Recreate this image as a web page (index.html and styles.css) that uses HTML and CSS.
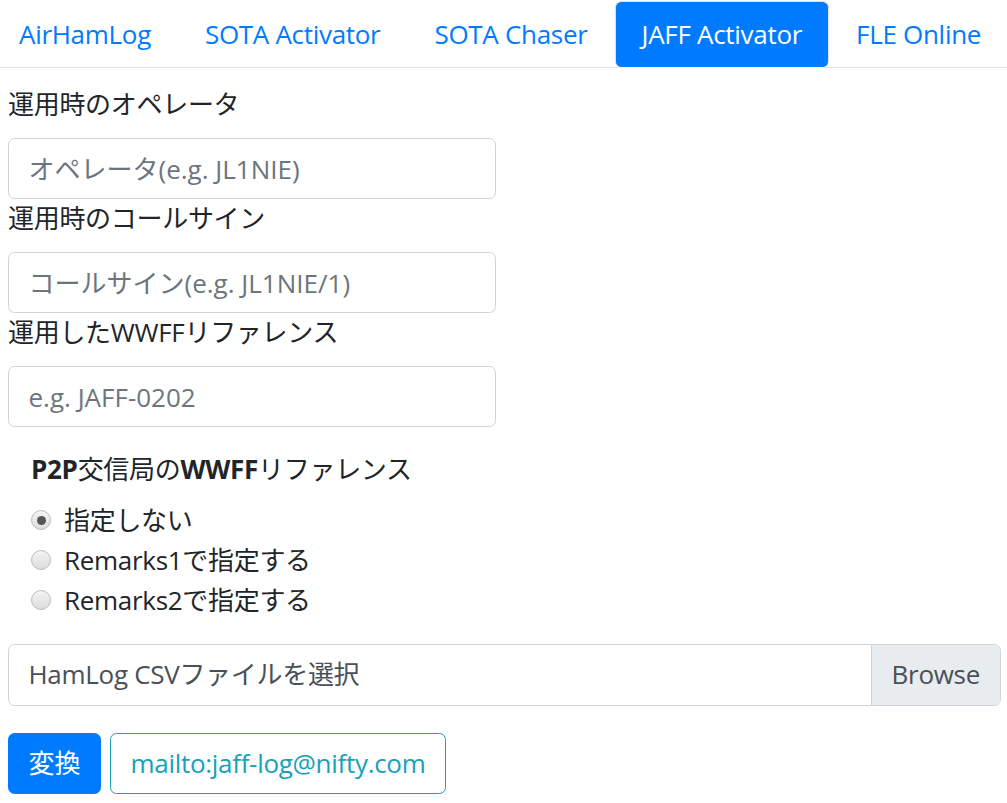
FILE: index.html
```html
<!DOCTYPE html>
<html lang="ja">

<head>
    <meta charset="UTF-8">
    <meta name="viewport" content="width=device-width, initial-scale=1.0">
    <title>JAFF Activator</title>
    <link rel="stylesheet" href="styles.css">
</head>

<body>
    <ul class="nav-tabs">
        <li><a href="#" class="nav-link">AirHamLog</a></li>
        <li><a href="#" class="nav-link">SOTA Activator</a></li>
        <li><a href="#" class="nav-link">SOTA Chaser</a></li>
        <li><a href="#" class="nav-link active">JAFF Activator</a></li>
        <li><a href="#" class="nav-link">FLE Online</a></li>
    </ul>

    <form class="tab-content">
        <label class="field-label" for="operator">運用時のオペレータ</label>
        <input type="text" id="operator" class="form-control" placeholder="オペレータ(e.g. JL1NIE)">

        <label class="field-label" for="callsign">運用時のコールサイン</label>
        <input type="text" id="callsign" class="form-control" placeholder="コールサイン(e.g. JL1NIE/1)">

        <label class="field-label" for="ref">運用したWWFFリファレンス</label>
        <input type="text" id="ref" class="form-control" placeholder="e.g. JAFF-0202">

        <div class="p2p">
            <div class="p2p-title"><b>P2P</b>交信局の<b>WWFF</b>リファレンス</div>
            <label class="radio"><input type="radio" name="p2p" checked><span>指定しない</span></label>
            <label class="radio"><input type="radio" name="p2p"><span>Remarks1で指定する</span></label>
            <label class="radio"><input type="radio" name="p2p"><span>Remarks2で指定する</span></label>
        </div>

        <div class="custom-file">
            <span class="custom-file-label">HamLog CSVファイルを選択</span>
            <span class="browse">Browse</span>
        </div>

        <div class="buttons">
            <button type="button" class="btn btn-primary">変換</button>
            <a href="#" class="btn btn-outline-info">mailto:jaff-log@nifty.com</a>
        </div>
    </form>
</body>

</html>
```

FILE: styles.css
```css
* {
    margin: 0;
    padding: 0;
    box-sizing: border-box;
}

body {
    font-family: "Open Sans", "Noto Sans CJK JP", sans-serif;
    font-size: 26px;
    line-height: 39px;
    letter-spacing: -0.3px;
    color: #212529;
    background: #fff;
}

/* タブ */
.nav-tabs {
    list-style: none;
    display: flex;
    margin-left: -8px;
    padding-top: 1px;
    border-bottom: 1px solid #dee2e6;
}

.nav-tabs li {
    margin-bottom: -1px;
}

.nav-link {
    display: block;
    padding: 13px 26px;
    border: 1px solid transparent;
    border-radius: 6.5px 6.5px 0 0;
    color: #007bff;
    text-decoration: none;
    white-space: nowrap;
}

.nav-link.active {
    color: #fff;
    background-color: #007bff;
    border-color: #dee2e6 #dee2e6 #fff;
    border-radius: 6.5px;
}

/* フォーム */
.tab-content {
    padding: 17px 6px 0 8px;
}

.field-label {
    display: block;
    margin-bottom: 14px;
}

.form-control {
    display: block;
    width: 488px;
    height: 61px;
    padding: 9.75px 19.5px;
    font: inherit;
    color: #495057;
    border: 1px solid #ced4da;
    border-radius: 6.5px;
    outline: none;
}

.form-control::placeholder {
    color: #6c757d;
}

.p2p {
    padding: 23px 0 0 23px;
}

.p2p-title {
    margin-bottom: 11px;
}

.radio {
    display: flex;
    align-items: center;
    height: 40px;
}

.radio input {
    appearance: none;
    width: 20px;
    height: 20px;
    margin-right: 13px;
    border: 1px solid #bcbcbc;
    border-radius: 50%;
    background: linear-gradient(#f4f4f4, #dcdcdc);
    display: grid;
    place-items: center;
}

.radio input:checked::after {
    content: "";
    width: 9px;
    height: 9px;
    border-radius: 50%;
    background: #555;
}

.custom-file {
    display: flex;
    height: 62px;
    margin-top: 24px;
    border: 1px solid #ced4da;
    border-radius: 6.5px;
    color: #495057;
    overflow: hidden;
}

.custom-file-label {
    flex: 1;
    padding: 10px 19.5px;
}

.browse {
    padding: 10px 20px;
    background: #e9ecef;
    border-left: 1px solid #ced4da;
}

.buttons {
    margin-top: 27px;
    display: flex;
    gap: 9px;
}

.btn {
    display: inline-block;
    height: 61px;
    padding: 9.75px 19.5px;
    font: inherit;
    border: 1px solid transparent;
    border-radius: 6.5px;
    text-decoration: none;
    background: none;
}

.btn-primary {
    color: #fff;
    background-color: #007bff;
    border-color: #007bff;
}

.btn-outline-info {
    color: #17a2b8;
    border-color: #17a2b8;
}
```
